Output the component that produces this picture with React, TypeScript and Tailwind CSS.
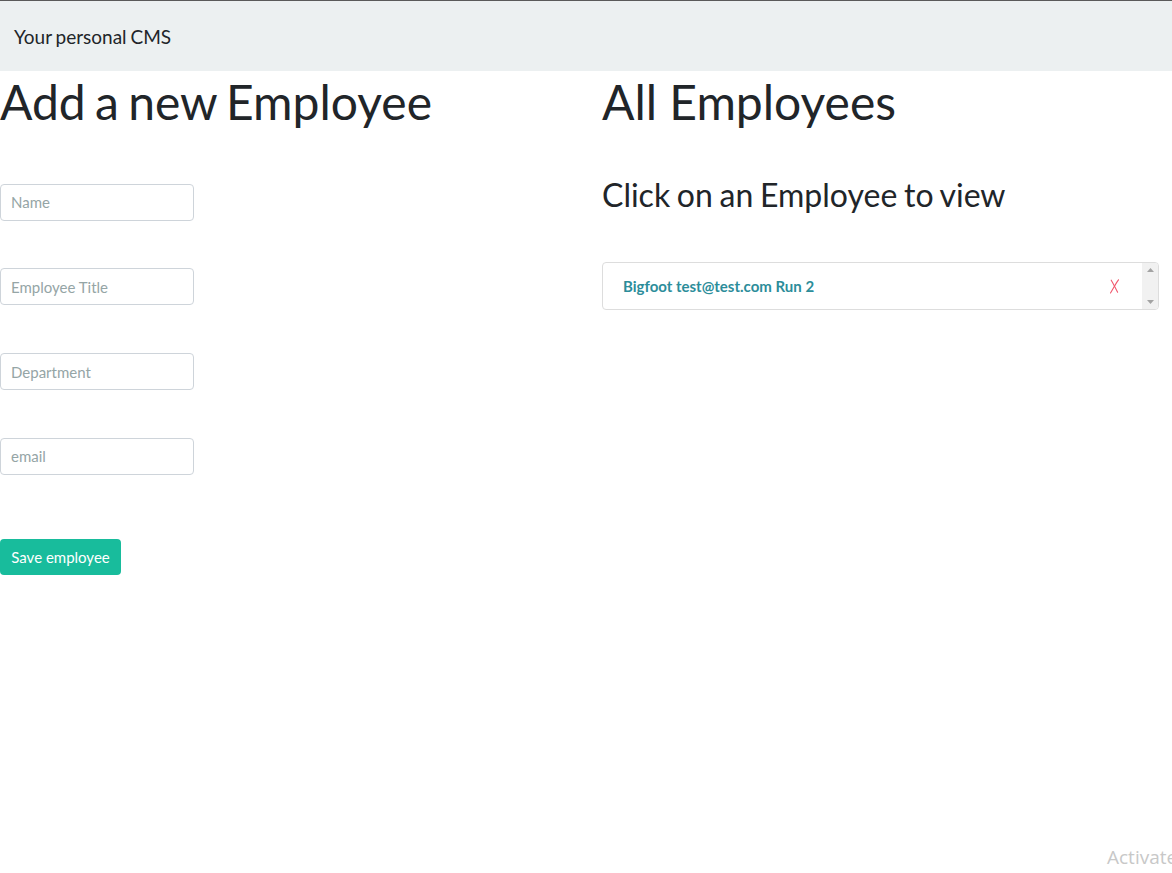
import React from "react";

export default function App() {
  const fields = ["Name", "Employee Title", "Department", "email"];
  return (
    <div className="relative min-h-[873px] overflow-hidden bg-white text-[#212529]" style={{ fontFamily: "Lato, 'Noto Sans', sans-serif" }}>
      <nav className="h-[71px] border-t border-[#5a5a5a] bg-[#ecf0f1] flex items-center px-[14px]">
        <span className="text-[19px] text-[#212529] leading-none [word-spacing:-1px]">Your personal CMS</span>
      </nav>
      <div className="grid grid-cols-[602px_1fr] pr-[13px]">
        <div>
          <h1 className="text-[48px] leading-[1.2] mt-[2px] font-normal [word-spacing:-3px]">Add a new Employee</h1>
          <form className="flex flex-col mt-[53px] gap-[47.8px] w-[194px]">
            {fields.map((f) => (
              <input
                key={f}
                placeholder={f}
                className="h-[37px] w-full rounded-[4px] border border-[#ced4da] px-[10px] text-[15px] placeholder:text-[#95a5a6] outline-none"
              />
            ))}
          </form>
          <button className="mt-[64px] h-[36px] w-[121px] rounded-[4px] bg-[#18bc9c] text-[15px] text-white">Save employee</button>
        </div>
        <div>
          <h1 className="text-[48px] leading-[1.2] mt-[2px] font-normal">All Employees</h1>
          <h3 className="text-[32px] leading-[1.2] mt-[45px] font-normal [word-spacing:-1.5px]">Click on an Employee to view</h3>
          <div className="mt-[48px] flex h-[48px] rounded-[4px] border border-[#dddddd] overflow-hidden">
            <div className="flex flex-1 items-center justify-between pl-[20px] pr-[22px]">
              <span className="text-[15px] font-bold text-[#2c8d9a]">Bigfoot test@test.com Run 2</span>
              <svg width="11" height="15" viewBox="0 0 11 15" className="mt-[1px]" aria-label="delete">
                <path d="M1.5 14 C4 10 7 4 9.5 0.8" fill="none" stroke="#f0566c" strokeWidth="1.1" strokeLinecap="round" />
                <path d="M2.2 1.2 C4.5 5 6.5 9 8.6 13.2" fill="none" stroke="#f0566c" strokeWidth="1.1" strokeLinecap="round" />
              </svg>
            </div>
            <div className="flex w-[16px] flex-col items-center justify-between bg-[#f1f1f1] py-[5px]">
              <svg width="7" height="4" viewBox="0 0 7 4"><path d="M0 4 L3.5 0 L7 4Z" fill="#a3a3a3" /></svg>
              <svg width="7" height="4" viewBox="0 0 7 4"><path d="M0 0 L3.5 4 L7 0Z" fill="#a3a3a3" /></svg>
            </div>
          </div>
        </div>
      </div>
      <div className="absolute left-[1107px] top-[843px] text-[19px] text-[#c8c8c8] whitespace-nowrap" style={{ fontFamily: "'Segoe UI', 'Open Sans', sans-serif" }}>Activate</div>
    </div>
  );
}
